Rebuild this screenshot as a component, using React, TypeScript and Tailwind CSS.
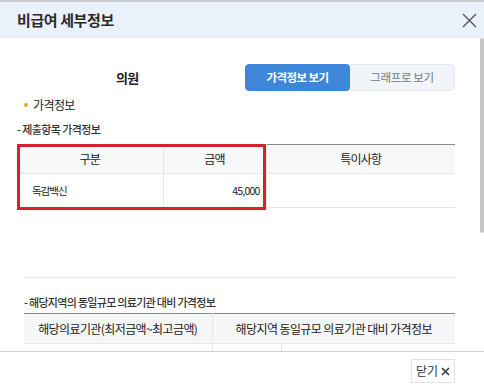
const rows = [
  { name: "독감백신", price: "45,000", note: "" },
];

const CloseIcon = () => (
  <svg width="15" height="15" viewBox="0 0 15 15" fill="none">
    <path d="M1 1L14 14M14 1L1 14" stroke="#555" strokeWidth="1.4" />
  </svg>
);

export default function App() {
  return (
    <div
      className="w-[484px] h-[390px] bg-white flex flex-col overflow-hidden text-[#222]"
      style={{ fontFamily: '"Noto Sans CJK KR", "Noto Sans", sans-serif' }}
    >
      {/* header */}
      <div className="h-[38px] shrink-0 border-t-[2px] border-[#c9cdd2] bg-[#e9f1fb] flex items-center justify-between pl-[17px] pr-[7px]">
        <h1 className="text-[15px] font-bold text-[#2b2b2b] tracking-[-0.4px]">비급여 세부정보</h1>
        <button className="w-[15px] h-[15px] flex items-center justify-center">
          <CloseIcon />
        </button>
      </div>

      {/* body */}
      <div className="h-[313px] shrink-0 flex overflow-hidden">
        <div className="flex-1 pl-[17px] pr-[25px] pt-[26px]">
          <div className="flex items-center h-[27px]">
            <div className="flex-1 pl-[99px] text-[13px] font-bold text-[#222] tracking-[-0.8px]">의원</div>
            <div className="flex w-[210px] h-[27px] rounded-[4px] overflow-hidden">
              <button className="w-[105px] bg-[#3d86d8] text-white text-[11.5px] font-bold tracking-[-0.6px] rounded-[4px]">
                가격정보 보기
              </button>
              <button className="w-[105px] bg-[#f1f4f8] border border-[#e4e9ef] border-l-0 rounded-r-[4px] text-[#777] text-[11.5px] tracking-[-0.4px]">
                그래프로 보기
              </button>
            </div>
          </div>

          <div className="flex items-center gap-[5px] mt-[5px] h-[18px] pl-[7px]">
            <span className="w-[4px] h-[4px] rounded-full bg-[#f0a23a]" />
            <span className="text-[12px] text-[#222] tracking-[-0.6px]">가격정보</span>
          </div>

          <div className="mt-[6px] h-[18px] flex items-center text-[11px] font-medium text-[#333] tracking-[-0.6px]">
            - 제출항목 가격정보
          </div>

          <div className="relative mt-[6px]">
            <table className="w-full border-collapse border-t border-[#888] text-[12px] tracking-[-0.8px]">
              <thead>
                <tr className="bg-[#f7f8fa] h-[29px]">
                  <th className="w-[146px] font-normal border-b border-r border-[#e5e7ea]">구분</th>
                  <th className="w-[103px] font-normal border-b border-r border-[#e5e7ea]">금액</th>
                  <th className="font-normal border-b border-[#e5e7ea]">특이사항</th>
                </tr>
              </thead>
              <tbody>
                {rows.map((r) => (
                  <tr key={r.name} className="h-[34px] text-[10.5px]">
                    <td className="pl-[15px] border-b border-r border-[#e5e7ea] tracking-[-1px]">{r.name}</td>
                    <td className="pr-[6px] text-right border-b border-r border-[#e5e7ea] tracking-[-0.8px]">{r.price}</td>
                    <td className="border-b border-[#e5e7ea]">{r.note}</td>
                  </tr>
                ))}
              </tbody>
            </table>
            <div className="absolute left-0 top-0 w-[249px] h-[66px] border-[3px] border-[#d6202b]" />
          </div>

          <div className="pl-[7px]">
            <div className="h-[70px] border-b border-[#e5e7ea]" />

            <div className="mt-[17px] h-[14px] flex items-center text-[11px] font-medium text-[#333] tracking-[-0.7px]">
              - 해당지역의 동일규모 의료기관 대비 가격정보
            </div>

            <table className="mt-[4px] w-full border-collapse border-t border-[#888] text-[12px] tracking-[-0.6px]">
              <thead>
                <tr className="bg-[#f5f6f8] h-[30px]">
                  <th className="w-[188px] font-normal border-b border-r border-[#e5e7ea]">
                    해당의료기관(최저금액~최고금액)
                  </th>
                  <th colSpan={2} className="font-normal border-b border-[#e5e7ea]">
                    해당지역 동일규모 의료기관 대비 가격정보
                  </th>
                </tr>
              </thead>
              <tbody>
                {[0, 1, 2].map((i) => (
                  <tr key={i} className="h-[34px] text-[11px]">
                    <td className="border-b border-r border-[#e5e7ea]" />
                    <td className="w-[69px] border-b border-r border-[#e5e7ea]" />
                    <td className="border-b border-[#e5e7ea]" />
                  </tr>
                ))}
              </tbody>
            </table>
          </div>
        </div>

        {/* scrollbar */}
        <div className="w-[4px] shrink-0">
          <div className="h-[195px] w-[4px] rounded-full bg-[#c6c6c6]" />
        </div>
      </div>

      {/* footer */}
      <div className="flex-1 border-t border-[#d4d4d4] flex items-center justify-end pr-[29px]">
        <button className="h-[24px] w-[44px] border border-[#e2e2e2] bg-white text-[12px] text-[#333] flex items-center justify-center gap-[3px]">
          닫기
          <svg width="9" height="9" viewBox="0 0 9 9">
            <path d="M1 1L8 8M8 1L1 8" stroke="#333" strokeWidth="1.5" />
          </svg>
        </button>
      </div>
    </div>
  );
}
